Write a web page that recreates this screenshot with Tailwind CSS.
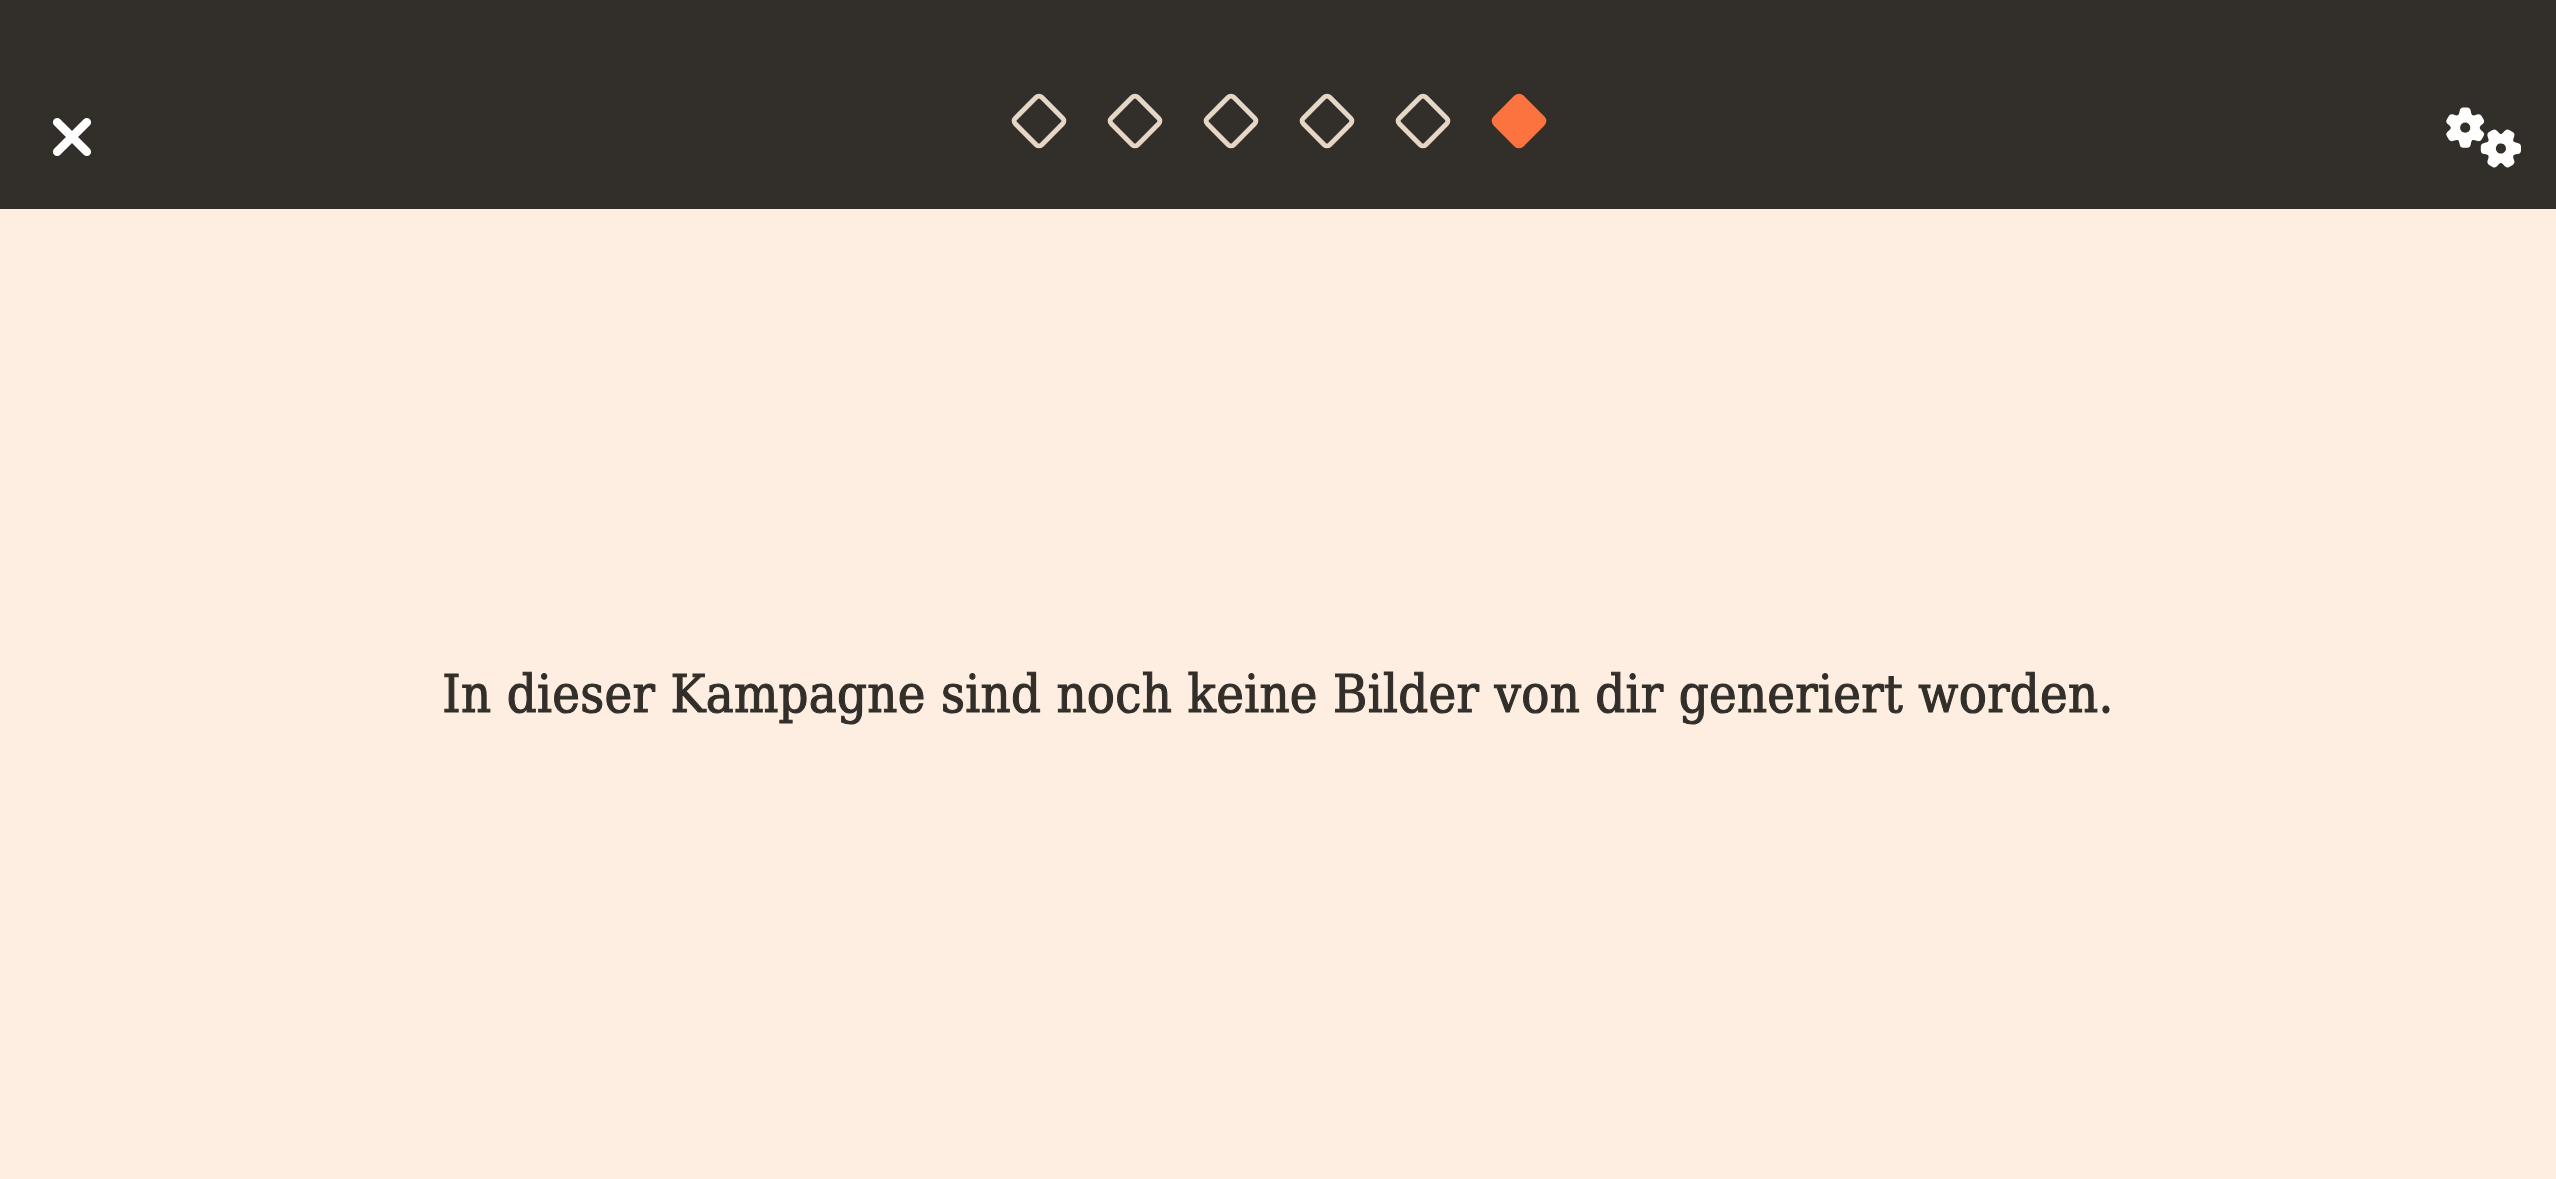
<!DOCTYPE html>
<html lang="de">
<head>
<meta charset="utf-8">
<title>Kampagne</title>
<script src="https://cdn.jsdelivr.net/npm/@tailwindcss/browser@4"></script>
</head>
<body class="flex h-screen flex-col overflow-hidden bg-[#fdeee1] text-[#322e29]">
<svg class="hidden">
  <defs>
    <path id="tooth" d="M-8.4 -11 C-6.4 -13 -5.9 -14 -5.6 -16.6 Q-5 -20.1 -2 -20.1 H2 Q5 -20.1 5.6 -16.6 C5.9 -14 6.4 -13 8.4 -11Z"/>
    <g id="gear">
      <circle r="14"/>
      <use href="#tooth"/>
      <use href="#tooth" transform="rotate(60)"/>
      <use href="#tooth" transform="rotate(120)"/>
      <use href="#tooth" transform="rotate(180)"/>
      <use href="#tooth" transform="rotate(240)"/>
      <use href="#tooth" transform="rotate(300)"/>
      <circle r="5.1" fill="#322e29"/>
    </g>
    <rect id="diamond" x="-18.75" y="-18.75" width="37.5" height="37.5" rx="4" stroke-width="4.9" transform="translate(28 28) rotate(45)"/>
  </defs>
</svg>
<header class="flex h-[209px] shrink-0 justify-between bg-[#322e29] pr-[34px] pl-[52px]">
  <button class="mt-[117px] h-10 w-[62px]" aria-label="Schließen">
    <svg class="block size-10" viewBox="0 0 40 40" stroke="#fff" stroke-width="8.6" stroke-linecap="round"><path d="M5.2 5.2 34.8 34.8M34.8 5.2 5.2 34.8"/></svg>
  </button>
  <nav class="mt-[93px] flex gap-10">
    <svg class="size-14" fill="none" stroke="#e6d6c5"><use href="#diamond"/></svg>
    <svg class="size-14" fill="none" stroke="#e6d6c5"><use href="#diamond"/></svg>
    <svg class="size-14" fill="none" stroke="#e6d6c5"><use href="#diamond"/></svg>
    <svg class="size-14" fill="none" stroke="#e6d6c5"><use href="#diamond"/></svg>
    <svg class="size-14" fill="none" stroke="#e6d6c5"><use href="#diamond"/></svg>
    <svg class="size-14" fill="#fc7340" stroke="#fc7340"><use href="#diamond"/></svg>
  </nav>
  <button class="mt-[105px] h-[66px] w-[78px]" aria-label="Einstellungen">
    <svg class="block h-[66px] w-[78px]" viewBox="2444 105 78 66" fill="#fff">
      <use href="#gear" transform="translate(2465.2 127.7)"/>
      <use href="#gear" transform="translate(2500.9 148.5) rotate(30)"/>
    </svg>
  </button>
</header>
<main class="flex flex-1 items-center justify-center">
  <p class="font-['DejaVu_Serif_Condensed','DejaVu_Serif',serif] text-[52px] tracking-[0.32px] whitespace-nowrap [-webkit-text-stroke:1.1px_#322e29]">In dieser Kampagne sind noch keine Bilder von dir generiert worden.</p>
</main>
</body>
</html>
